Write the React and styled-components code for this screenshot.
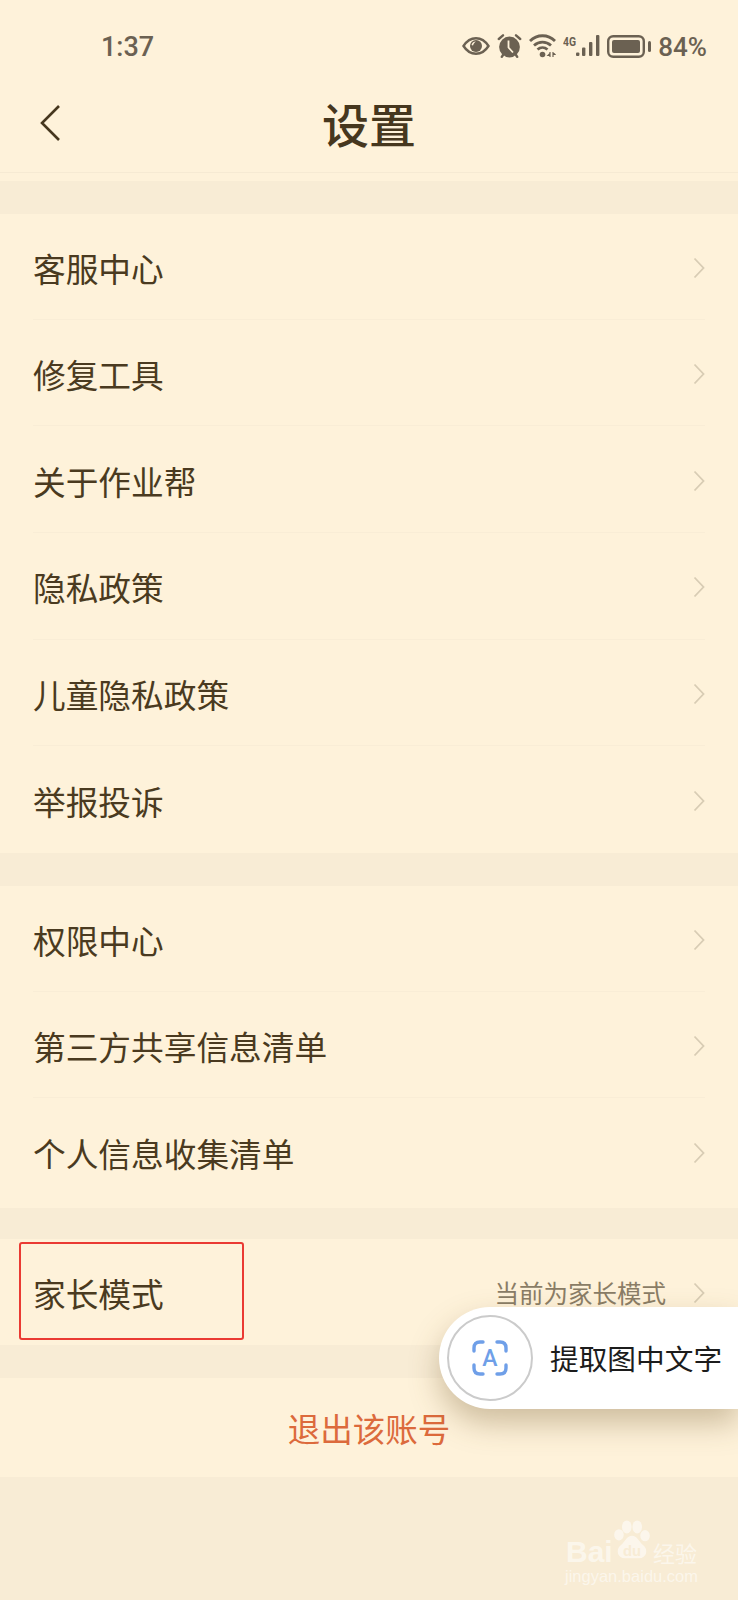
import styled, { createGlobalStyle } from 'styled-components';

const GlobalStyle = createGlobalStyle`
	html, body {
		margin: 0;
		padding: 0;
		background: #f8ecd5;
	}
	* {
		box-sizing: border-box;
	}
`;

const Page = styled.div`
	position: relative;
	width: 738px;
	height: 1600px;
	overflow: hidden;
	background: #f8ecd5;
	color: #4a3a20;
	font-family: "Noto Sans CJK SC", "Noto Sans", sans-serif;
`;

const Top = styled.div`
	background: #fef2da;
`;

const StatusBar = styled.div`
	display: flex;
	align-items: center;
	justify-content: space-between;
	height: 92px;
	padding: 0 31px 0 101px;
	color: #6b6152;
	font-family: "Roboto", sans-serif;
`;

const Time = styled.span`
	margin-top: 2px;
	font-size: 27px;
	font-weight: 500;
`;

const StatusIcons = styled.div`
	display: flex;
	align-items: center;
	gap: 7px;
`;

const Battery = styled.span`
	margin-top: 2px;
	font-size: 26px;
	font-weight: 500;
`;

const Header = styled.div`
	position: relative;
	display: flex;
	align-items: center;
	justify-content: center;
	height: 81px;
	padding-bottom: 18px;
	border-bottom: 1px solid #f6ead3;
`;

const BackIcon = styled.svg`
	position: absolute;
	left: 38px;
	top: 12px;
`;

const Title = styled.h1`
	margin: 0;
	font-size: 47px;
	font-weight: 500;
	line-height: 60px;
	color: #46371e;
`;

const TopGap = styled.div`
	height: 8px;
	background: #fef2da;
`;

const Band = styled.div`
	height: ${({ $height }) => $height}px;
`;

const Section = styled.div`
	background: #fef2da;
	padding: 0 33px ${({ $bottom }) => $bottom || 0}px;
`;

const Row = styled.div`
	display: flex;
	align-items: center;
	justify-content: space-between;
	height: ${({ $height }) => $height}px;
	padding-top: 3px;
	border-bottom: ${({ $last }) => ($last ? 'none' : '1px solid #f9edd6')};
`;

const Label = styled.span`
	font-size: 32.7px;
	line-height: 44px;
	color: #4a3a20;
`;

const Right = styled.div`
	display: flex;
	align-items: center;
	gap: 27px;
`;

const Hint = styled.span`
	font-size: 24.5px;
	line-height: 32px;
	color: #8a7d66;
`;

const Exit = styled.div`
	display: flex;
	align-items: center;
	justify-content: center;
	height: 99px;
	background: #fef2da;
	font-size: 32.5px;
	color: #dc6a3c;
`;

const Highlight = styled.div`
	position: absolute;
	left: 19px;
	top: 1242px;
	width: 225px;
	height: 98px;
	border: 2px solid #ea3a33;
	border-radius: 3px;
`;

const Popup = styled.div`
	position: absolute;
	left: 439px;
	top: 1307px;
	width: 299px;
	height: 102px;
	display: flex;
	align-items: center;
	gap: 17px;
	padding-left: 8px;
	background: #ffffff;
	border-radius: 51px 0 0 51px;
	box-shadow: 0 14px 30px rgba(110, 85, 40, 0.34);
`;

const PopupCircle = styled.div`
	display: flex;
	align-items: center;
	justify-content: center;
	width: 86px;
	height: 86px;
	border: 2px solid #cbcbcb;
	border-radius: 50%;
`;

const PopupText = styled.span`
	font-size: 28.7px;
	line-height: 40px;
	color: #1c1c1c;
`;

const Watermark = styled.div`
	position: absolute;
	left: 565px;
	top: 1518px;
	width: 136px;
	height: 68px;
	color: rgba(255, 255, 255, 0.55);
`;

const Bai = styled.span`
	position: absolute;
	left: 1px;
	top: 17px;
	font-family: "Liberation Sans", sans-serif;
	font-size: 30px;
	font-weight: 700;
	line-height: 34px;
`;

const Jing = styled.span`
	position: absolute;
	left: 88px;
	top: 20px;
	font-size: 22px;
	line-height: 28px;
	white-space: nowrap;
`;

const Url = styled.span`
	position: absolute;
	left: 0;
	top: 48px;
	font-family: "Liberation Sans", sans-serif;
	font-size: 16.5px;
	line-height: 20px;
	white-space: nowrap;
`;

const Paw = styled.svg`
	position: absolute;
	left: 46px;
	top: 2px;
`;

const PawText = styled.text`
	font-family: "Liberation Sans", sans-serif;
	font-size: 17px;
	font-weight: 700;
	fill: #f8ecd5;
`;

const IconText = styled.text`
	font-family: "Roboto", sans-serif;
	font-size: 23px;
	font-weight: 500;
	fill: #6f9fe8;
`;

const SmallText = styled.text`
	font-family: "Roboto", sans-serif;
	font-size: 12px;
	font-weight: 700;
	fill: #6b6152;
`;

const Chevron = () => (
	<svg width="12" height="22" viewBox="0 0 12 22" fill="none">
		<path d="M1.5 1.5 L10.5 11 L1.5 20.5" stroke="#d8ccb4" strokeWidth="1.8" />
	</svg>
);

const EyeIcon = () => (
	<svg width="28" height="18" viewBox="0 0 28 18">
		<path d="M1.5 9 C5 3.5 9 1.2 14 1.2 C19 1.2 23 3.5 26.5 9 C23 14.5 19 16.8 14 16.8 C9 16.8 5 14.5 1.5 9 Z" fill="none" stroke="#6b6152" strokeWidth="2.4" />
		<circle cx="14" cy="9" r="6" fill="#6b6152" />
		<path d="M9.5 8 C10 5.5 12 4.5 14 4.5 C12.5 5.5 11.5 6.5 11 8.5 Z" fill="#fef2da" />
	</svg>
);

const AlarmIcon = () => (
	<svg width="25" height="24" viewBox="0 0 25 24">
		<circle cx="12.5" cy="13" r="10.4" fill="#6b6152" />
		<path d="M11.5 6.5 V13.5 L16 18.5" fill="none" stroke="#fef2da" strokeWidth="1.8" />
		<path d="M1.8 5 L6 1.3 M23.2 5 L19 1.3" stroke="#6b6152" strokeWidth="2.4" strokeLinecap="round" />
		<path d="M6 21 L4.8 22.8 M19 21 L20.2 22.8" stroke="#6b6152" strokeWidth="2.4" strokeLinecap="round" />
	</svg>
);

const WifiIcon = () => (
	<svg width="27" height="24" viewBox="0 0 27 24" fill="none">
		<path d="M1 7 C8 0 19 0 26 7" stroke="#6b6152" strokeWidth="2.8" />
		<path d="M5 11.5 C10 7 17 7 22 11.5" stroke="#6b6152" strokeWidth="2.8" />
		<path d="M8.5 15.5 C11.5 13 15.5 13 18.5 15.5" stroke="#6b6152" strokeWidth="2.8" />
		<circle cx="13.5" cy="20.5" r="2.8" fill="#6b6152" />
		<path d="M21 19.5 L19 21.5 H21 V19.5 M21 18 V23 M24 18 V23 M24 18.5 L26 20.5 H24" stroke="#6b6152" strokeWidth="1.2" />
	</svg>
);

const SignalIcon = () => (
	<svg width="37" height="22" viewBox="0 0 37 22">
		<SmallText x="0" y="10.5" textLength="13" lengthAdjust="spacingAndGlyphs">4G</SmallText>
		<rect x="13" y="17.5" width="3.4" height="3.5" rx="1" fill="#6b6152" />
		<rect x="19" y="12.5" width="3.4" height="8.5" rx="1" fill="#6b6152" />
		<rect x="26" y="7" width="3.4" height="14" rx="1" fill="#6b6152" />
		<rect x="33" y="0" width="3.4" height="21" rx="1" fill="#6b6152" />
	</svg>
);

const BatteryIcon = () => (
	<svg width="44" height="23" viewBox="0 0 44 23">
		<rect x="1.2" y="1.2" width="35.6" height="20.6" rx="5" fill="none" stroke="#6b6152" strokeWidth="2.4" />
		<rect x="5" y="5" width="28" height="13" rx="2" fill="#6b6152" />
		<rect x="41" y="6" width="3" height="11" rx="1.5" fill="#6b6152" />
	</svg>
);

const ScanIcon = () => (
	<svg width="36" height="36" viewBox="0 0 36 36" fill="none">
		<path d="M2 11 V8 C2 4 4 2 8 2 H11 M25 2 H28 C32 2 34 4 34 8 V11" stroke="#6f9fe8" strokeWidth="3.4" strokeLinecap="round" />
		<path d="M2 25 V28 C2 32 4 34 8 34 H11 M25 34 H28 C32 34 34 32 34 28 V25" stroke="#6f9fe8" strokeWidth="3.4" strokeLinecap="round" />
		<IconText x="18" y="26" textAnchor="middle">A</IconText>
	</svg>
);

const firstGroup = ['客服中心', '修复工具', '关于作业帮', '隐私政策', '儿童隐私政策', '举报投诉'];
const secondGroup = ['权限中心', '第三方共享信息清单', '个人信息收集清单'];

const MenuSection = ({ items, rowHeight, bottom }) => (
	<Section $bottom={bottom}>
		{items.map((item, index) => (
			<Row
				key={item}
				$height={index === 0 ? rowHeight - 0.8 : rowHeight}
				$last={index === items.length - 1}
			>
				<Label>{item}</Label>
				<Chevron />
			</Row>
		))}
	</Section>
);

export default function App() {
	return (
		<Page>
			<GlobalStyle />
			<Top>
				<StatusBar>
					<Time>1:37</Time>
					<StatusIcons>
						<EyeIcon />
						<AlarmIcon />
						<WifiIcon />
						<SignalIcon />
						<BatteryIcon />
						<Battery>84%</Battery>
					</StatusIcons>
				</StatusBar>
				<Header>
					<BackIcon width="24" height="38" viewBox="0 0 24 38" fill="none">
						<path d="M21 2 L4 19 L21 36" stroke="#46371e" strokeWidth="2.6" />
					</BackIcon>
					<Title>设置</Title>
				</Header>
				<TopGap />
			</Top>
			<Band $height={33} />
			<MenuSection items={firstGroup} rowHeight={106.6} />
			<Band $height={33} />
			<MenuSection items={secondGroup} rowHeight={106.6} bottom={3} />
			<Band $height={31} />
			<Section>
				<Row $last $height={106}>
					<Label>家长模式</Label>
					<Right>
						<Hint>当前为家长模式</Hint>
						<Chevron />
					</Right>
				</Row>
			</Section>
			<Band $height={33} />
			<Exit>退出该账号</Exit>

			<Highlight />
			<Popup>
				<PopupCircle>
					<ScanIcon />
				</PopupCircle>
				<PopupText>提取图中文字</PopupText>
			</Popup>
			<Watermark>
				<Bai>Bai</Bai>
				<Paw width="42" height="40" viewBox="0 0 48 46">
					<ellipse cx="9" cy="17" rx="5.5" ry="6.5" fill="#fff" fillOpacity="0.55" />
					<ellipse cx="18" cy="8" rx="5.5" ry="7.5" fill="#fff" fillOpacity="0.55" />
					<ellipse cx="30" cy="8" rx="5.5" ry="7.5" fill="#fff" fillOpacity="0.55" />
					<ellipse cx="39" cy="18" rx="5.5" ry="6.5" fill="#fff" fillOpacity="0.55" />
					<path d="M24 18 C30 18 32 25 37 29 C43 34 41 44 32 44 H16 C7 44 5 34 11 29 C16 25 18 18 24 18 Z" fill="#fff" fillOpacity="0.55" />
					<PawText x="24" y="41" textAnchor="middle">du</PawText>
				</Paw>
				<Jing>经验</Jing>
				<Url>jingyan.baidu.com</Url>
			</Watermark>
		</Page>
	);
}
